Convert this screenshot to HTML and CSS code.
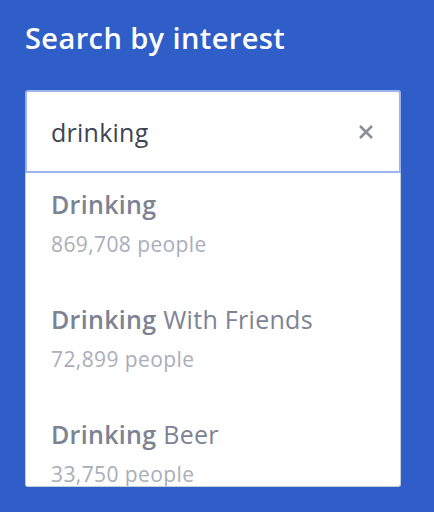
FILE: index.html
```html
<!DOCTYPE html>
<html lang="en">
<head>
    <meta charset="UTF-8">
    <meta name="viewport" content="width=device-width, initial-scale=1.0">
    <title>Search by interest</title>
    <link rel="stylesheet" href="styles.css">
</head>
<body>
    <div class="panel">
        <h1 class="panel-title">Search by interest</h1>

        <div class="search">
            <div class="search-box">
                <input type="text" class="search-input" value="drinking">
                <button class="clear-btn" aria-label="Clear">
                    <svg width="16" height="16" viewBox="0 0 16 16">
                        <path d="M2 2 L14 14 M14 2 L2 14" stroke="currentColor" stroke-width="2.6" stroke-linecap="butt" fill="none"/>
                    </svg>
                </button>
            </div>

            <ul class="results">
                <li class="result">
                    <div class="result-name"><b>Drinking</b></div>
                    <div class="result-count">869,708 people</div>
                </li>
                <li class="result">
                    <div class="result-name"><b>Drinking</b> With Friends</div>
                    <div class="result-count">72,899 people</div>
                </li>
                <li class="result">
                    <div class="result-name"><b>Drinking</b> Beer</div>
                    <div class="result-count">33,750 people</div>
                </li>
            </ul>
        </div>
    </div>
</body>
</html>
```

FILE: styles.css
```css
* {
    margin: 0;
    padding: 0;
    box-sizing: border-box;
    font-family: "Open Sans", "Noto Sans", Arial, sans-serif;
}

body {
    background-color: #2f5ec9;
    min-height: 100vh;
}

.panel {
    padding: 20px 33px 0 25px;
}

.panel-title {
    color: #fff;
    font-size: 29px;
    font-weight: 600;
    line-height: 35px;
    letter-spacing: 0.4px;
    margin-bottom: 35px;
}

.search {
    width: 376px;
}

.search-box {
    display: flex;
    align-items: center;
    height: 83px;
    background: #fff;
    border: 2px solid #9db3ec;
    border-radius: 3px 3px 0 0;
}

.search-input {
    flex: 1;
    min-width: 0;
    height: 100%;
    border: none;
    outline: none;
    background: transparent;
    padding-left: 24px;
    font-size: 25px;
    letter-spacing: 0.25px;
    color: #3e4452;
}

.clear-btn {
    border: none;
    background: none;
    color: #8a8e99;
    width: 16px;
    height: 16px;
    margin-right: 25px;
    display: flex;
    cursor: pointer;
}

.results {
    list-style: none;
    background: #fff;
    height: 314px;
    overflow: hidden;
    border: 1px solid #c4cbda;
    border-top: none;
    border-radius: 0 0 3px 3px;
}

.result {
    padding: 14px 25px 30px;
}

.result-name {
    font-size: 25px;
    line-height: 34px;
    letter-spacing: 0.3px;
    color: #7c8392;
    margin-bottom: 9px;
}

.result-name b {
    font-weight: 600;
}

.result-count {
    font-size: 21px;
    line-height: 28px;
    letter-spacing: 0.4px;
    color: #a9aeb9;
}
```
